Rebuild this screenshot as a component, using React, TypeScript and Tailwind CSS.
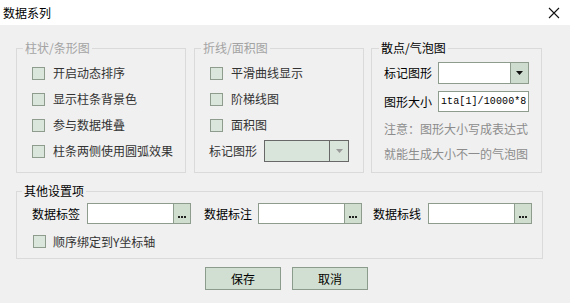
import React from "react";

const font = { fontFamily: '"Noto Sans CJK SC", "Noto Sans", sans-serif' };

function Check({ label }: { label: string }) {
  return (
    <div className="flex h-[26px] items-center gap-[8px]">
      <div className="h-[13px] w-[13px] border border-[#8d9c8d] bg-[#dae5db]" />
      <span className="text-[12px] leading-[14px] text-[#333]">{label}</span>
    </div>
  );
}

function Browse({ className = "" }: { className?: string }) {
  return (
    <div className={"flex h-[21px] w-[104px] border border-[#8e9c8e] bg-white " + className}>
      <div className="flex-1" />
      <div className="flex w-[17px] items-end justify-center gap-[1px] border-l border-[#8e9c8e] bg-[#cfdecf] pb-[5px]">
        <div className="h-[2px] w-[2px] bg-[#222]" />
        <div className="h-[2px] w-[2px] bg-[#222]" />
        <div className="h-[2px] w-[2px] bg-[#222]" />
      </div>
    </div>
  );
}

export default function App() {
  return (
    <div className="h-[303px] w-[570px] overflow-hidden bg-[#f0f0f0]" style={font}>
      <div className="flex h-[25px] items-center justify-between bg-white pl-[3px] pr-[10px]">
        <span className="text-[12px] leading-[14px] text-black">数据系列</span>
        <svg width="12" height="12" viewBox="0 0 12 12">
          <path d="M1 1 L11 11 M11 1 L1 11" stroke="#111" strokeWidth="1.1" />
        </svg>
      </div>
      <div className="px-[16px]">
        <div className="mt-[16px] flex">
          <fieldset className="h-[132px] w-[170px] border border-[#dadada] p-0 pl-[15px] pt-[5px]">
            <legend className="-ml-[9px] px-[2px] text-[12px] leading-[14px] text-[#a3a3a3]">柱状/条形图</legend>
            <Check label="开启动态排序" />
            <Check label="显示柱条背景色" />
            <Check label="参与数据堆叠" />
            <Check label="柱条两侧使用圆弧效果" />
          </fieldset>
          <fieldset className="ml-[8px] h-[132px] w-[170px] border border-[#dadada] p-0 pl-[15px] pt-[5px]">
            <legend className="-ml-[9px] px-[2px] text-[12px] leading-[14px] text-[#a3a3a3]">折线/面积图</legend>
            <Check label="平滑曲线显示" />
            <Check label="阶梯线图" />
            <Check label="面积图" />
            <div className="-ml-[1px] flex h-[26px] items-center gap-[7px]">
              <span className="text-[12px] leading-[14px] text-[#333]">标记图形</span>
              <div className="flex h-[22px] w-[85px] border border-[#686868] bg-[#d9e4da]">
                <div className="flex-1" />
                <div className="flex w-[19px] items-center justify-center border-l border-[#686868]">
                  <svg width="7" height="4" viewBox="0 0 7 4">
                    <path d="M0 0 H7 L3.5 4 Z" fill="#9a9a9a" />
                  </svg>
                </div>
              </div>
            </div>
          </fieldset>
          <fieldset className="ml-[7px] h-[132px] w-[171px] border border-[#dadada] p-0 pl-[12px] pt-[7px]">
            <legend className="-ml-[5px] px-[2px] text-[12px] leading-[14px] text-black">散点/气泡图</legend>
            <div className="flex h-[22px] items-center gap-[6px]">
              <span className="text-[12px] leading-[14px] text-black">标记图形</span>
              <div className="flex h-[22px] w-[91px] border border-[#8e9c8e] bg-white">
                <div className="flex-1" />
                <div className="flex w-[18px] items-center justify-center border-l border-[#8e9c8e] bg-[#cedccf]">
                  <svg width="7" height="4" viewBox="0 0 7 4">
                    <path d="M0 0 H7 L3.5 4 Z" fill="#111" />
                  </svg>
                </div>
              </div>
            </div>
            <div className="mt-[7px] flex h-[21px] items-center gap-[6px]">
              <span className="text-[12px] leading-[14px] text-black">图形大小</span>
              <div className="flex h-[21px] w-[91px] items-center overflow-hidden border border-[#8e9c8e] bg-white pl-[2px]">
                <span
                  className="whitespace-nowrap text-[10px] leading-[14px] tracking-[0.1px] text-black"
                  style={{ fontFamily: '"Liberation Mono", monospace' }}
                >
                  ıta[1]/10000*8
                </span>
              </div>
            </div>
            <div className="mt-[4px] h-[25px] text-[12px] leading-[25px] text-[#8c8c8c]">注意：图形大小写成表达式</div>
            <div className="h-[25px] text-[12px] leading-[25px] text-[#8c8c8c]">就能生成大小不一的气泡图</div>
          </fieldset>
        </div>
        <fieldset className="mt-[11px] h-[75px] w-[527px] border border-[#dadada] p-0 pl-[15px] pt-[5px]">
          <legend className="-ml-[10px] px-[2px] text-[12px] leading-[14px] text-black">其他设置项</legend>
          <div className="flex h-[21px] items-center">
            <span className="text-[12px] leading-[14px] text-black">数据标签</span>
            <Browse className="ml-[7px]" />
            <span className="ml-[13px] text-[12px] leading-[14px] text-black">数据标注</span>
            <Browse className="ml-[6px]" />
            <span className="ml-[11px] text-[12px] leading-[14px] text-black">数据标线</span>
            <Browse className="ml-[7px]" />
          </div>
          <div className="ml-[1px] mt-[11px] flex h-[13px] items-center gap-[7px]">
            <div className="h-[13px] w-[13px] border border-[#8d9c8d] bg-[#dae5db]" />
            <span className="text-[12px] leading-[14px] text-[#333]">顺序绑定到Y坐标轴</span>
          </div>
        </fieldset>
        <div className="mt-[8px] flex justify-center gap-[11px] pl-[3px]">
          <div className="flex h-[23px] w-[76px] items-center justify-center border border-[#8c9c8c] bg-[#d0dfd1] text-[12px] leading-[14px] text-black">
            保存
          </div>
          <div className="flex h-[23px] w-[76px] items-center justify-center border border-[#8c9c8c] bg-[#d0dfd1] text-[12px] leading-[14px] text-black">
            取消
          </div>
        </div>
      </div>
    </div>
  );
}
